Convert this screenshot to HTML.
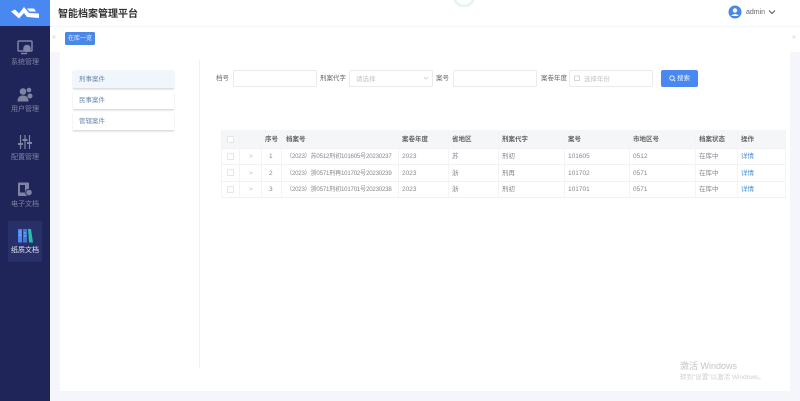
<!DOCTYPE html>
<html lang="zh">
<head>
<meta charset="utf-8">
<style>
*{box-sizing:border-box;margin:0;padding:0}
html,body{width:800px;height:401px;overflow:hidden;background:#f4f6fb;font-family:"Liberation Sans","Noto Sans CJK SC",sans-serif}
#wrap{position:absolute;left:0;top:0;width:800px;height:401px;filter:blur(.3px)}
.a{position:absolute;white-space:nowrap}
#side{left:0;top:0;width:50px;height:401px;background:#1f2558}
#logo{left:0;top:0;width:50px;height:26px;background:#4a88f1}
.nav{left:0;width:50px;text-align:center;font-size:7px;color:#7f84a3;line-height:10px}
#head{left:50px;top:0;width:750px;height:26px;background:#fff}
#bar{left:50px;top:26px;width:750px;height:26px;background:#fff;border-top:1px solid #f5f6f8}
#panel{left:60px;top:52px;width:730px;height:339px;background:#fff}
.tree{left:73px;width:101px;height:18px;background:#fff;font-size:6.5px;color:#6d88aa;line-height:19px;padding-left:6px;box-shadow:0 1.5px 1.5px #d8dbe0}
.lab{font-size:6.5px;color:#666;line-height:10px}
.inp{height:17px;background:#fff;border:1px solid #e8eaee;border-radius:2px;font-size:6.5px;color:#c4c4c4;line-height:17px;padding-left:6px}
.th{top:131px;height:17px;font-size:6.5px;line-height:18px;color:#666;font-weight:bold}
.td{font-size:6.5px;color:#888;line-height:10px}
.no{letter-spacing:-.2px;font-size:6.1px}
.hl{left:221px;width:565px;height:1px;background:#f0f1f4}
.vl{width:1px;top:131px;height:67px;background:#f3f4f6}
.cb{left:227px;width:7px;height:7px;border:1px solid #e4e6ea;background:#fff;border-radius:1px}
</style>
</head>
<body>
<div id="wrap">
<div class="a" id="side"></div>
<div class="a" id="logo">
<svg width="50" height="26" viewBox="0 0 50 26"><path d="M11 11.500 L15 9.500 L19 13.500 L24 7 L29 13 L39 13.500 L39 18 L27 17 L24 13 L19 18.500 Z" fill="#fff"/><path d="M27 8.500 H34 L36 11.500 H29.500 Z" fill="#fff"/></svg>
</div>

<svg class="a" style="left:17px;top:40px" width="16" height="15" viewBox="0 0 16 15"><rect x="1" y="1" width="14" height="10" rx="1" fill="none" stroke="#7f84a3" stroke-width="1.5"/><circle cx="10" cy="8.500" r="3.800" fill="#7f84a3"/><path d="M4 13.500h6" stroke="#7f84a3" stroke-width="1.500"/></svg>
<div class="a nav" style="top:58px">系统管理</div>
<svg class="a" style="left:17px;top:87px" width="16" height="15" viewBox="0 0 16 15"><circle cx="6" cy="4.500" r="3.300" fill="#7f84a3"/><path d="M0.500 14.500c0-4 2-6 5.500-6s5.500 2 5.500 6z" fill="#7f84a3"/><circle cx="12" cy="3" r="2.300" fill="#7f84a3"/><circle cx="13" cy="9" r="2.500" fill="#7f84a3"/></svg>
<div class="a nav" style="top:105px">用户管理</div>
<svg class="a" style="left:18px;top:134px" width="14" height="16" viewBox="0 0 14 16"><path d="M2.500 1v14M7 1v14M11.500 1v14" stroke="#7f84a3" stroke-width="1.200"/><path d="M0 10h5M4.500 6h5M9 9h5" stroke="#7f84a3" stroke-width="2"/></svg>
<div class="a nav" style="top:153px">配置管理</div>
<svg class="a" style="left:17px;top:182px" width="16" height="15" viewBox="0 0 16 15"><rect x="1" y="0.500" width="11" height="13.500" rx="1" fill="#7f84a3"/><rect x="3" y="3" width="5" height="7.500" fill="#1f2558"/><circle cx="12" cy="10.500" r="3.300" fill="#7f84a3" stroke="#1f2558"/></svg>
<div class="a nav" style="top:200px">电子文档</div>
<div class="a" style="left:8px;top:221px;width:34px;height:41px;background:#273068"></div>
<svg class="a" style="left:17px;top:228px" width="16" height="15" viewBox="0 0 16 15"><rect x="1" y="1" width="4" height="13.500" fill="#4a88f1"/><rect x="6" y="1" width="4" height="13.500" fill="#3f78dd"/><path d="M2 4h2M2 7h2M7 5h2M7 8h2" stroke="#a9c6f7" stroke-width=".8"/><path d="M11 1h3l2 13.500h-4z" fill="#27c0a6"/></svg>
<div class="a nav" style="top:246px;color:#e6e8f2">纸质文档</div>

<div class="a" id="head"></div>
<div class="a" style="left:58px;top:6.500px;font-size:10px;line-height:15px;font-weight:bold;color:#333">智能档案管理平台</div>
<svg class="a" style="left:450px;top:0" width="30" height="8" viewBox="0 0 30 8"><circle cx="14" cy="-4" r="10" fill="none" stroke="#e3f5ea" stroke-width="2.500"/></svg>
<svg class="a" style="left:728px;top:5px" width="15" height="15" viewBox="0 0 15 15"><circle cx="7" cy="7" r="6.500" fill="#4a88e8"/><circle cx="7" cy="5.500" r="2.200" fill="#fff"/><path d="M3.500 11c.5-2.500 6.500-2.500 7 0z" fill="#fff"/></svg>
<div class="a" style="left:746px;top:8px;font-size:7px;line-height:10px;color:#666">admin</div>
<svg class="a" style="left:768px;top:9px" width="8" height="6" viewBox="0 0 8 6"><path d="M1 1.500l3 3 3-3" fill="none" stroke="#555" stroke-width="1"/></svg>

<div class="a" id="bar"></div>
<div class="a" style="left:52px;top:33px;font-size:7px;line-height:9px;color:#ccc">«</div>
<div class="a" style="left:65px;top:32px;width:30px;height:13px;background:#4a88e8;border-radius:1.500px;color:#e6efff;font-size:6px;line-height:15px;text-align:center">在库一览</div>
<div class="a" style="left:792px;top:33px;font-size:7px;line-height:9px;color:#ccc">»</div>

<div class="a" id="panel"></div>
<div class="a tree" style="left:73px;top:70px;background:#f1f6fd">刑事案件</div>
<div class="a tree" style="top:91px">民事案件</div>
<div class="a tree" style="top:112px">管辖案件</div>
<div class="a" style="left:199px;top:60px;width:1px;height:308px;background:#eef0f3"></div>

<div class="a lab" style="left:216px;top:74px">档号</div>
<div class="a inp" style="left:233px;top:70px;width:84px"></div>
<div class="a lab" style="left:320px;top:74px">刑案代字</div>
<div class="a inp" style="left:349px;top:70px;width:84px">请选择</div>
<svg class="a" style="left:423px;top:76px" width="6" height="5" viewBox="0 0 6 5"><path d="M1 1l2 2 2-2" fill="none" stroke="#ccc" stroke-width=".8"/></svg>
<div class="a lab" style="left:436px;top:74px">案号</div>
<div class="a inp" style="left:453px;top:70px;width:84px"></div>
<div class="a lab" style="left:541px;top:74px">案卷年度</div>
<div class="a inp" style="left:569px;top:70px;width:84px;padding-left:14px">选择年份</div>
<svg class="a" style="left:574px;top:75px" width="6" height="6" viewBox="0 0 6 6"><rect x=".5" y="1" width="5" height="4.500" fill="none" stroke="#ccc" stroke-width=".8"/></svg>
<div class="a" style="left:661px;top:70px;width:37px;height:17px;background:#4a88f1;border-radius:2px;color:#eaf2ff;font-size:6.500px;line-height:18px;padding-left:16px">搜索</div>
<svg class="a" style="left:669px;top:75px" width="7" height="7" viewBox="0 0 7 7"><circle cx="3" cy="3" r="2.200" fill="none" stroke="#fff" stroke-width=".8"/><path d="M4.700 4.700l1.500 1.500" stroke="#fff" stroke-width=".8"/></svg>

<div class="a" style="left:221px;top:130px;width:565px;height:18px;background:#f5f6f8"></div>
<div class="a hl" style="top:148px"></div>
<div class="a hl" style="top:164px"></div>
<div class="a hl" style="top:181px"></div>
<div class="a hl" style="top:197px"></div>
<div class="a vl" style="left:221px"></div>
<div class="a vl" style="left:239px"></div>
<div class="a vl" style="left:261px"></div>
<div class="a vl" style="left:281px"></div>
<div class="a vl" style="left:398px"></div>
<div class="a vl" style="left:448px"></div>
<div class="a vl" style="left:498px"></div>
<div class="a vl" style="left:564px"></div>
<div class="a vl" style="left:629px"></div>
<div class="a vl" style="left:695px"></div>
<div class="a vl" style="left:737px"></div>
<div class="a vl" style="left:785px"></div>

<div class="a cb" style="top:136px"></div>
<div class="a th" style="left:265px">序号</div>
<div class="a th" style="left:286px">档案号</div>
<div class="a th" style="left:402px">案卷年度</div>
<div class="a th" style="left:452px">省地区</div>
<div class="a th" style="left:502px">刑案代字</div>
<div class="a th" style="left:568px">案号</div>
<div class="a th" style="left:633px">市地区号</div>
<div class="a th" style="left:699px">档案状态</div>
<div class="a th" style="left:741px">操作</div>

<div class="a cb" style="top:153px"></div>
<div class="a td" style="left:249px;top:152px;color:#bbb">&gt;</div>
<div class="a td" style="left:269px;top:152px">1</div>
<div class="a td no" style="left:286px;top:152px">（2023）苏0512刑初101605号20230237</div>
<div class="a td" style="left:402px;top:152px">2023</div>
<div class="a td" style="left:452px;top:152px">苏</div>
<div class="a td" style="left:502px;top:152px">刑初</div>
<div class="a td" style="left:568px;top:152px">101605</div>
<div class="a td" style="left:633px;top:152px">0512</div>
<div class="a td" style="left:699px;top:152px">在库中</div>
<div class="a td" style="left:741px;top:152px;color:#4a90d0">详情</div>

<div class="a cb" style="top:169px"></div>
<div class="a td" style="left:249px;top:169px;color:#bbb">&gt;</div>
<div class="a td" style="left:269px;top:169px">2</div>
<div class="a td no" style="left:286px;top:169px">（2023）浙0571刑再101702号20230239</div>
<div class="a td" style="left:402px;top:169px">2023</div>
<div class="a td" style="left:452px;top:169px">浙</div>
<div class="a td" style="left:502px;top:169px">刑再</div>
<div class="a td" style="left:568px;top:169px">101702</div>
<div class="a td" style="left:633px;top:169px">0571</div>
<div class="a td" style="left:699px;top:169px">在库中</div>
<div class="a td" style="left:741px;top:169px;color:#4a90d0">详情</div>

<div class="a cb" style="top:186px"></div>
<div class="a td" style="left:249px;top:185px;color:#bbb">&gt;</div>
<div class="a td" style="left:269px;top:185px">3</div>
<div class="a td no" style="left:286px;top:185px">（2023）浙0571刑初101701号20230238</div>
<div class="a td" style="left:402px;top:185px">2023</div>
<div class="a td" style="left:452px;top:185px">浙</div>
<div class="a td" style="left:502px;top:185px">刑初</div>
<div class="a td" style="left:568px;top:185px">101701</div>
<div class="a td" style="left:633px;top:185px">0571</div>
<div class="a td" style="left:699px;top:185px">在库中</div>
<div class="a td" style="left:741px;top:185px;color:#4a90d0">详情</div>

<div class="a" style="left:680px;top:361px;font-size:9px;line-height:11px;color:#c4c4c4">激活 Windows</div>
<div class="a" style="left:680px;top:373px;font-size:6.500px;line-height:9px;color:#cfcfcf">转到"设置"以激活 Windows。</div>
</div>
</body>
</html>
